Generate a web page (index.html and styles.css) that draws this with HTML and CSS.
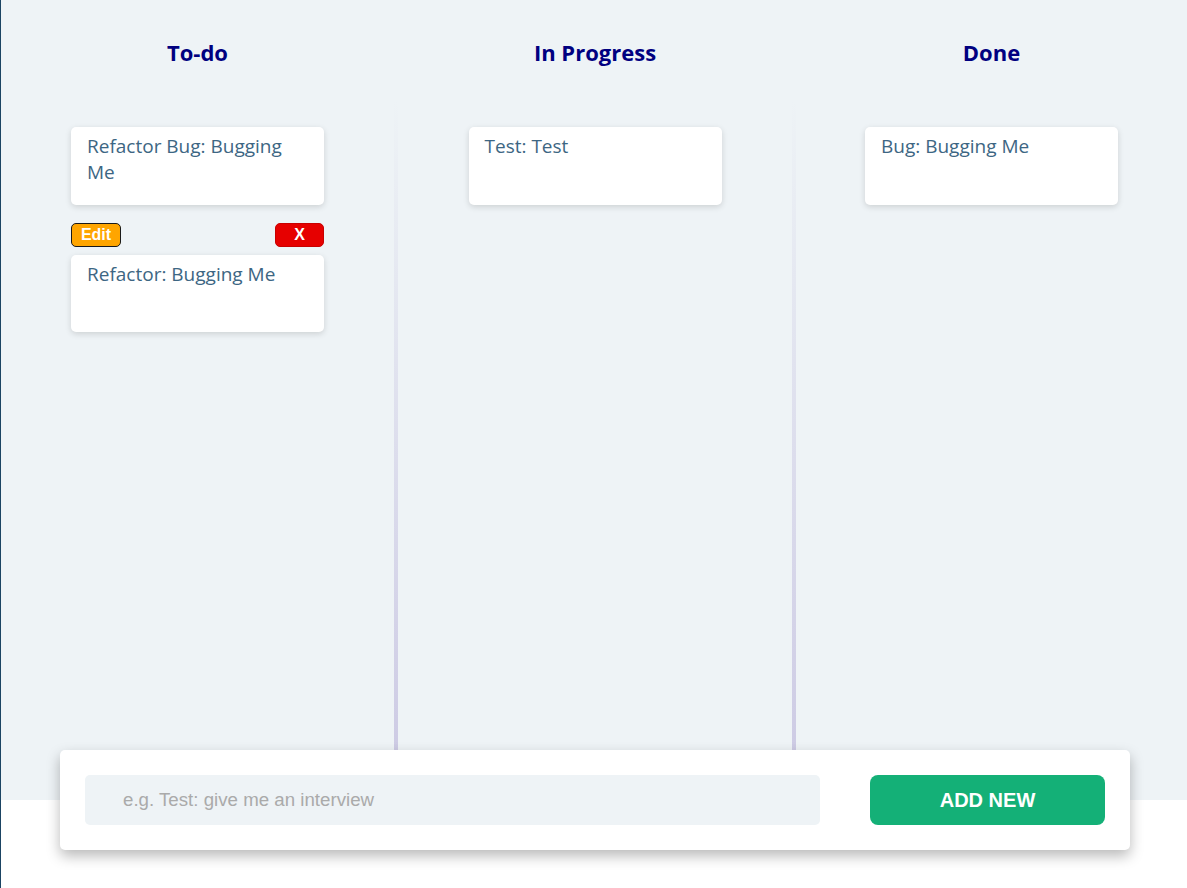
FILE: index.html
```html
<!DOCTYPE html>
<html lang="en">
<head>
<meta charset="utf-8">
<title>Kanban</title>
<link rel="stylesheet" href="styles.css">
</head>
<body>
<div class="page">
  <div class="board">
    <section class="lane">
      <h2 class="lane-title">To-do</h2>
      <div class="lane-body">
        <div class="card"><p class="card-text">Refactor Bug: Bugging Me</p></div>
        <div class="card-tools">
          <button class="btn-edit">Edit</button>
          <button class="btn-del">X</button>
        </div>
        <div class="card card-tight"><p class="card-text">Refactor: Bugging Me</p></div>
      </div>
    </section>
    <div class="divider"></div>
    <section class="lane">
      <h2 class="lane-title">In Progress</h2>
      <div class="lane-body">
        <div class="card"><p class="card-text">Test: Test</p></div>
      </div>
    </section>
    <div class="divider"></div>
    <section class="lane">
      <h2 class="lane-title">Done</h2>
      <div class="lane-body">
        <div class="card"><p class="card-text">Bug: Bugging Me</p></div>
      </div>
    </section>
  </div>
  <form class="composer">
    <input class="composer-input" type="text" placeholder="e.g. Test: give me an interview">
    <button class="composer-btn" type="button">ADD NEW</button>
  </form>
</div>
</body>
</html>
```
FILE: styles.css
```css
html, body {
  margin: 0;
  padding: 0;
  background: #ffffff;
}
body {
  border-left: 1px solid #1b4463;
  min-height: 888px;
  box-sizing: border-box;
  overflow: hidden;
}
.page {
  width: 1186px;
}
.board {
  height: 800px;
  background: #eef3f6;
  display: grid;
  grid-template-columns: 393px 4px 394px 4px 1fr;
}
.lane {
  display: flex;
  flex-direction: column;
}
.lane-title {
  margin: 0;
  height: 100px;
  display: flex;
  align-items: center;
  justify-content: center;
  padding-top: 4px;
  box-sizing: border-box;
  font-family: "Open Sans", "Noto Sans", sans-serif;
  font-weight: 700;
  font-size: 22px;
  color: #000080;
}
.divider {
  margin-top: 100px;
  background: linear-gradient(to bottom, rgba(203, 200, 227, 0) 0%, #cbc8e3 100%);
}
.lane-body {
  padding-top: 27px;
  display: flex;
  flex-direction: column;
  align-items: center;
}
.card {
  width: 253px;
  height: 78px;
  box-sizing: border-box;
  background: #ffffff;
  border-radius: 5px;
  box-shadow: 0 2px 6px rgba(0, 0, 0, 0.14);
  padding: 6px 16px;
}
.card-tight {
  height: 77px;
}
.card-text {
  margin: 0;
  font-family: "Open Sans", "Noto Sans", sans-serif;
  font-size: 19px;
  font-weight: 500;
  line-height: 26px;
  color: #3d6683;
}
.card-tools {
  width: 253px;
  margin-top: 18px;
  margin-bottom: 8px;
  display: flex;
  justify-content: space-between;
}
.btn-edit, .btn-del {
  height: 24px;
  padding: 0;
  border-radius: 5px;
  font-family: "Liberation Sans", Arial, sans-serif;
  font-weight: 700;
  font-size: 16px;
  color: #ffffff;
  line-height: 20px;
}
.btn-edit {
  width: 50px;
  background: #ffa500;
  border: 1px solid #1a1a1a;
}
.btn-del {
  width: 49px;
  background: #e60000;
  border: 1px solid #c80000;
}
.composer {
  position: relative;
  margin: -50px 57px 0 59px;
  height: 100px;
  box-sizing: border-box;
  padding: 25px;
  background: #ffffff;
  border-radius: 5px;
  box-shadow: 0 6px 14px rgba(0, 0, 0, 0.28);
  display: flex;
  gap: 50px;
}
.composer-input {
  flex: 1;
  height: 50px;
  box-sizing: border-box;
  border: none;
  outline: none;
  border-radius: 5px;
  background: #eef3f6;
  padding: 0 0 0 38px;
  font-family: "Liberation Sans", Arial, sans-serif;
  font-size: 18.7px;
  color: #333;
}
.composer-input::placeholder {
  color: #aaaaaa;
}
.composer-btn {
  width: 235px;
  height: 50px;
  border: none;
  border-radius: 8px;
  background: #14b077;
  color: #ffffff;
  font-family: "Liberation Sans", Arial, sans-serif;
  font-weight: 700;
  font-size: 20px;
}
```
